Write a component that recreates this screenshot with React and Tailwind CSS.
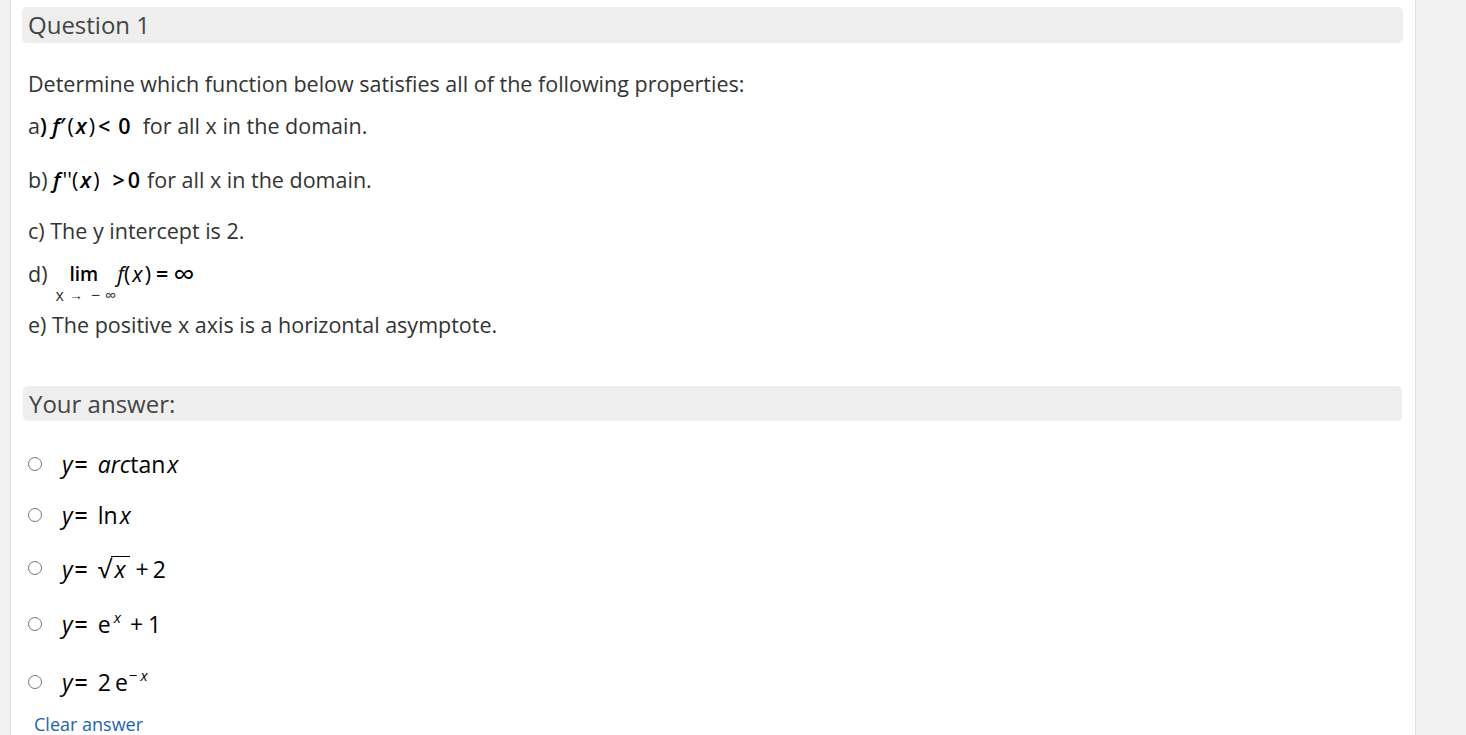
import React from "react";

const F = { fontFamily: '"Open Sans", "Noto Sans", sans-serif' };

function Radio() {
  return (
    <span className="inline-block w-[14px] h-[14px] rounded-full border border-[#767676] bg-white shrink-0" />
  );
}

function Option({ children }) {
  return (
    <div className="flex items-center h-[34px]">
      <div className="w-[40px] pl-[6px] flex items-center">
        <Radio />
      </div>
      <div className="text-[23px] text-black leading-none flex items-baseline">{children}</div>
    </div>
  );
}

function Eq() {
  return <span className="ml-[2px] mr-[10px] font-semibold">=</span>;
}

export default function App() {
  return (
    <div className="flex w-[1466px] h-[735px] overflow-hidden bg-white text-[#333]" style={F}>
      <div className="w-[11px] shrink-0 bg-[#f1f1f1] border-r border-[#e2e2e2]" />
      <div className="flex-1 pl-[11px] pr-[12px]">
        <div className="mt-[7px] h-[36px] rounded-[5px] bg-[#eeeeee] px-[6px] flex items-center text-[24px] text-[#444]">
          Question 1
        </div>
        <div className="pl-[6px] text-[21.5px]">
          <div className="mt-[26px] h-[30px] flex items-center">
            Determine which function below satisfies all of the following properties:
          </div>
          <div className="mt-[12px] h-[30px] flex items-center">
            <span>a</span>
            <span className="font-semibold text-black">)&nbsp;</span>
            <span className="italic text-black font-semibold">f</span>
            <span className="text-black font-semibold">′</span>
            <span className="text-black ml-[2px]">(</span>
            <span className="italic text-black font-semibold mx-[2px]">x</span>
            <span className="text-black">)</span>
            <span className="text-black font-semibold ml-[3px]">&lt;</span>
            <span className="text-black font-semibold ml-[8px]">0</span>
            <span className="ml-[12px]">for all x in the domain.</span>
          </div>
          <div className="mt-[24px] h-[30px] flex items-center">
            <span>b)&nbsp;</span>
            <span className="italic text-black font-semibold">f</span>
            <span className="text-black ml-[2px]">''(</span>
            <span className="italic text-black font-semibold mx-[2px]">x</span>
            <span className="text-black">)</span>
            <span className="text-black font-semibold ml-[13px]">&gt;</span>
            <span className="text-black font-semibold ml-[3px]">0</span>
            <span className="ml-[7px]">for all x in the domain.</span>
          </div>
          <div className="mt-[21px] h-[30px] flex items-center">c) The y intercept is 2.</div>
          <div className="mt-[13px] h-[30px] flex items-center relative">
            <span>d)</span>
            <span className="relative ml-[22px] text-black font-semibold text-[19px] leading-[26px]">
              lim
              <span className="absolute left-[-14px] top-[26px] text-[16px] leading-[16px] font-normal text-[#333] whitespace-nowrap flex items-center">
                <span>x</span>
                <span className="ml-[5px] text-[14px]">→</span>
                <span className="ml-[8px]">−</span>
                <span className="ml-[5px]">∞</span>
              </span>
            </span>
            <span className="ml-[19px] italic text-black">f</span>
            <span className="text-black">(</span>
            <span className="italic text-black mx-[2px]">x</span>
            <span className="text-black">)</span>
            <span className="text-black font-semibold mx-[5px]">=</span>
            <span className="text-black text-[30px] leading-none">∞</span>
          </div>
          <div className="mt-[21px] h-[30px] flex items-center">e) The positive x axis is a horizontal asymptote.</div>
        </div>

        <div className="mt-[46px] ml-[1px] mr-[1px] h-[35px] rounded-[5px] bg-[#eeeeee] px-[6px] flex items-center text-[24px] text-[#444]">
          Your answer:
        </div>

        <div className="mt-[26px]">
          <Option>
            <span className="italic">y</span>
            <Eq />
            <span className="italic">arc</span>
            <span>tan</span>
            <span className="italic ml-[2px]">x</span>
          </Option>
          <div className="h-[17px]" />
          <Option>
            <span className="italic">y</span>
            <Eq />
            <span>ln</span>
            <span className="italic ml-[2px]">x</span>
          </Option>
          <div className="h-[19px]" />
          <Option>
            <span className="italic">y</span>
            <Eq />
            <span className="text-[25px]">√</span>
            <span className="italic border-t-[1.5px] border-black leading-[24px] pl-[3px] pr-[4px]">x</span>
            <span className="ml-[6px]">+</span>
            <span className="ml-[4px]">2</span>
          </Option>
          <div className="h-[22px]" />
          <Option>
            <span className="italic">y</span>
            <Eq />
            <span>e</span>
            <span className="italic text-[15px] relative -top-[10px] ml-[3px]">x</span>
            <span className="ml-[9px]">+</span>
            <span className="ml-[5px]">1</span>
          </Option>
          <div className="h-[24px]" />
          <Option>
            <span className="italic">y</span>
            <Eq />
            <span>2</span>
            <span className="ml-[4px]">e</span>
            <span className="text-[15px] relative -top-[10px] ml-[1px]">−</span>
            <span className="italic text-[15px] relative -top-[10px] ml-[3px]">x</span>
          </Option>
        </div>
        <div className="mt-[13px] pl-[12px] text-[18px] leading-[24px] text-[#1d64b0]">Clear answer</div>
      </div>
      <div className="w-[51px] shrink-0 bg-[#f1f1f1] border-l border-[#e2e2e2]" />
    </div>
  );
}
